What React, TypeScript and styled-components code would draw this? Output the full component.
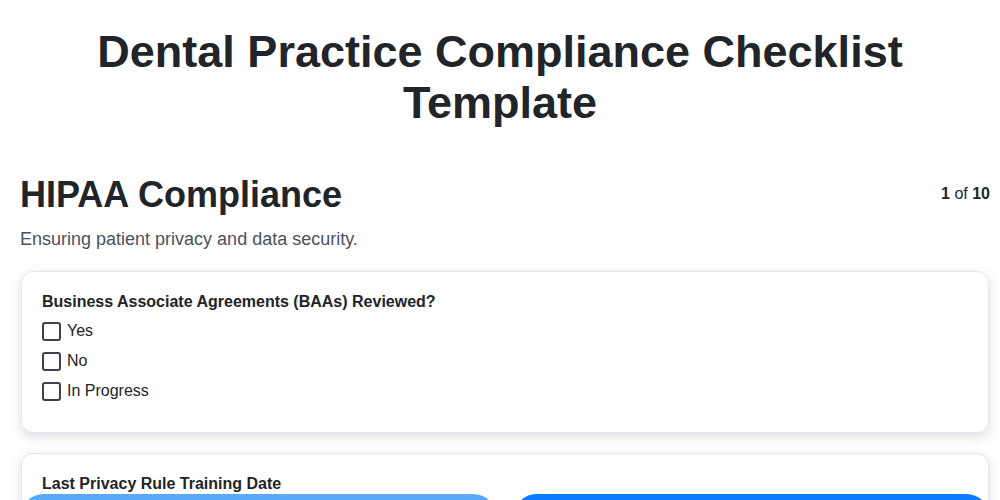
import React from 'react'
import styled, { createGlobalStyle } from 'styled-components'

const GlobalStyle = createGlobalStyle`
  html, body {
    margin: 0;
    padding: 0;
    background: #fff;
    font-family: "Liberation Sans", Arial, sans-serif;
    color: #212529;
  }
  * { box-sizing: border-box; }
`

const Header = styled.header`
  padding: 26px 60px 0;
`

const Page = styled.div`
  padding: 44px 10px 80px 20px;
`

const Title = styled.h1`
  margin: 0;
  text-align: center;
  font-size: 45px;
  line-height: 51px;
  font-weight: 700;
  color: #212529;
`

const SectionHeader = styled.div`
  display: flex;
  align-items: flex-start;
  justify-content: space-between;
`

const SectionTitle = styled.h2`
  margin: 0;
  font-size: 36px;
  line-height: 46px;
  font-weight: 700;
  color: #212529;
`

const Counter = styled.div`
  font-size: 16px;
  padding-top: 13px;
  color: #212529;
  b { font-weight: 700; }
`

const SectionDesc = styled.p`
  margin: 10px 0 21px;
  font-size: 18px;
  line-height: 22px;
  color: #4a5160;
`

const Card = styled.div`
  margin: 0 1px 20px;
  padding: 20px 20px 26px;
  background: #fff;
  border: 1px solid #e6e6ee;
  border-radius: 12px;
  box-shadow: 0 4px 12px rgba(20, 20, 40, 0.14);
`

const QuestionLabel = styled.div`
  font-size: 16px;
  font-weight: 700;
  line-height: 20px;
  margin-bottom: 4px;
`

const OptionRow = styled.label`
  display: flex;
  align-items: center;
  gap: 6px;
  height: 30px;
  font-size: 16px;
`

const Box = styled.span`
  width: 19px;
  height: 19px;
  border: 2px solid #3c4150;
  border-radius: 3px;
  background: #fff;
`

const Footer = styled.div`
  position: fixed;
  left: 20px;
  right: 10px;
  bottom: -42px;
  display: flex;
  gap: 16px;
`

const NavButton = styled.button<{ $dim?: boolean }>`
  flex: 1;
  height: 48px;
  border: none;
  border-radius: 24px;
  background: ${({ $dim }) => ($dim ? '#58aaf9' : '#0a7cff')};
`

const options = ['Yes', 'No', 'In Progress']

export default function App() {
  return (
    <>
      <GlobalStyle />
      <Header>
        <Title>Dental Practice Compliance Checklist Template</Title>
      </Header>
      <Page>
        <SectionHeader>
          <SectionTitle>HIPAA Compliance</SectionTitle>
          <Counter>
            <b>1</b> of <b>10</b>
          </Counter>
        </SectionHeader>
        <SectionDesc>Ensuring patient privacy and data security.</SectionDesc>
        <Card>
          <QuestionLabel>Business Associate Agreements (BAAs) Reviewed?</QuestionLabel>
          {options.map((o) => (
            <OptionRow key={o}>
              <Box />
              {o}
            </OptionRow>
          ))}
        </Card>
        <Card>
          <QuestionLabel>Last Privacy Rule Training Date</QuestionLabel>
        </Card>
      </Page>
      <Footer>
        <NavButton $dim aria-label="Previous" />
        <NavButton aria-label="Next" />
      </Footer>
    </>
  )
}
